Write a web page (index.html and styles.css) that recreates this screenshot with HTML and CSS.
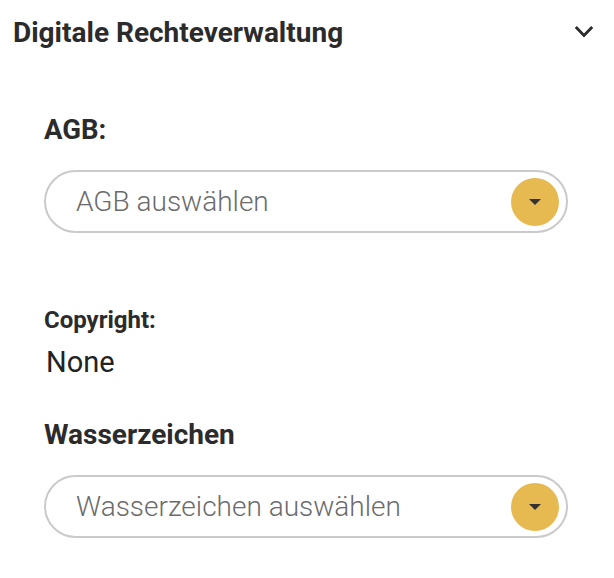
FILE: index.html
```html
<!DOCTYPE html>
<html lang="de">
<head>
<meta charset="utf-8">
<link rel="stylesheet" href="styles.css">
</head>
<body>
<section class="panel">
  <header class="panel-header">
    <h2 class="panel-title">Digitale Rechteverwaltung</h2>
    <svg class="chevron" width="20" height="13" viewBox="0 0 20 13"><path d="M1.8 2 L10 10.5 L18.2 2" fill="none" stroke="#2b2b2b" stroke-width="2.8"/></svg>
  </header>
  <div class="panel-body">
    <label class="field-label">AGB:</label>
    <div class="select">
      <span class="select-text">AGB auswählen</span>
      <span class="select-btn"><span class="caret"></span></span>
    </div>
    <div class="info">
      <div class="info-label">Copyright:</div>
      <div class="info-value">None</div>
    </div>
    <label class="field-label wm-label">Wasserzeichen</label>
    <div class="select">
      <span class="select-text">Wasserzeichen auswählen</span>
      <span class="select-btn"><span class="caret"></span></span>
    </div>
  </div>
</section>
</body>
</html>
```
FILE: styles.css
```css
html, body {
  margin: 0;
  padding: 0;
  background: #fff;
}
body {
  font-family: Roboto, "Liberation Sans", sans-serif;
  color: #2b2b2b;
}
.panel {
  width: 614px;
  padding: 0 20px 0 13px;
  box-sizing: border-box;
}
.panel-header {
  display: flex;
  justify-content: space-between;
  align-items: center;
  padding-top: 17px;
}
.panel-title {
  margin: 0;
  font-size: 28px;
  line-height: 32px;
  font-weight: 700;
  color: #2b2b2b;
}
.chevron {
  display: block;
  margin-top: -3px;
}
.panel-body {
  padding: 65px 26px 0 31px;
  display: flex;
  flex-direction: column;
}
.field-label {
  display: block;
  font-size: 27.5px;
  line-height: 32px;
  font-weight: 700;
  color: #2b2b2b;
  margin-bottom: 24px;
}
.select {
  height: 63px;
  box-sizing: border-box;
  border: 2px solid #cacaca;
  border-radius: 32px;
  display: flex;
  align-items: center;
  justify-content: space-between;
  padding: 0 7px 0 30px;
}
.select-text {
  font-size: 28px;
  line-height: 32px;
  font-weight: 300;
  color: #6b6b6b;
}
.select-btn {
  width: 48px;
  height: 48px;
  border-radius: 50%;
  background: #e6b951;
  display: flex;
  align-items: center;
  justify-content: center;
}
.caret {
  width: 0;
  height: 0;
  border-left: 6px solid transparent;
  border-right: 6px solid transparent;
  border-top: 6px solid #333;
}
.info {
  margin-top: 73px;
}
.info-label {
  font-size: 24px;
  line-height: 28px;
  font-weight: 700;
  color: #2b2b2b;
}
.info-value {
  font-size: 29px;
  line-height: 34px;
  font-weight: 400;
  color: #222;
  margin-top: 11px;
  padding-left: 2px;
}
.wm-label {
  margin-top: 40px;
  font-size: 28px;
}
```
